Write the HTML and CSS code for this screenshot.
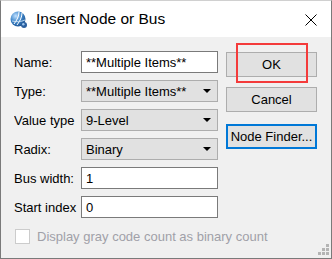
FILE: index.html
```html
<!DOCTYPE html>
<html lang="en">
<head>
    <meta charset="UTF-8">
    <title>Insert Node or Bus</title>
    <link rel="stylesheet" href="styles.css">
</head>
<body>
    <div class="window">
        <div class="titlebar">
            <svg class="app-icon" width="18" height="18" viewBox="0 0 18 18">
                <defs>
                    <radialGradient id="globe" cx="0.35" cy="0.3" r="0.8">
                        <stop offset="0" stop-color="#bfe0ff"/>
                        <stop offset="0.5" stop-color="#3d85c9"/>
                        <stop offset="1" stop-color="#1b4f8c"/>
                    </radialGradient>
                </defs>
                <circle cx="8" cy="8" r="7.5" fill="url(#globe)"/>
                <path d="M4 13 C7 9 9 5 9 1" stroke="#fff" stroke-width="1" fill="none"/>
                <path d="M7 14 C10 10 12 6 12 2" stroke="#fff" stroke-width="1" fill="none"/>
                <path d="M2 10 C6 11 11 11 15 9" stroke="#dbeaf7" stroke-width="0.8" fill="none"/>
                <circle cx="14" cy="14" r="3" fill="#2a5f9e"/>
                <circle cx="13.3" cy="13.3" r="1.2" fill="#9cc6ef"/>
            </svg>
            <span class="title">Insert Node or Bus</span>
            <svg class="close" width="12" height="12" viewBox="0 0 12 12">
                <path d="M0.5 0.5 L11.5 11.5 M11.5 0.5 L0.5 11.5" stroke="#000" stroke-width="1"/>
            </svg>
        </div>

        <div class="content">
            <div class="main">
                <div class="fields">
                    <label>Name:</label>
                    <div class="input">**Multiple Items**</div>

                    <label>Type:</label>
                    <div class="select">**Multiple Items**<span class="arrow"></span></div>

                    <label>Value type</label>
                    <div class="select">9-Level<span class="arrow"></span></div>

                    <label>Radix:</label>
                    <div class="select">Binary<span class="arrow"></span></div>

                    <label>Bus width:</label>
                    <div class="input">1</div>

                    <label>Start index</label>
                    <div class="input">0</div>
                </div>

                <div class="buttons">
                    <div class="button">OK</div>
                    <div class="button">Cancel</div>
                    <div class="button focused">Node Finder...</div>
                </div>
            </div>

            <div class="check-row">
                <span class="checkbox"></span>
                <span class="check-text">Display gray code count as binary count</span>
            </div>

            <svg class="grip" width="12" height="12" viewBox="0 0 12 12">
                <rect x="9" y="1" width="3" height="3" fill="#b4b4b4"/>
                <rect x="5" y="5" width="3" height="3" fill="#b4b4b4"/>
                <rect x="9" y="5" width="3" height="3" fill="#b4b4b4"/>
                <rect x="1" y="9" width="3" height="3" fill="#b4b4b4"/>
                <rect x="5" y="9" width="3" height="3" fill="#b4b4b4"/>
                <rect x="9" y="9" width="3" height="3" fill="#b4b4b4"/>
            </svg>
        </div>

        <div class="highlight"></div>
    </div>
</body>
</html>
```

FILE: styles.css
```css
/* Window */
body {
    margin: 0;
    font-family: "Liberation Sans", Arial, sans-serif;
    font-size: 13px;
    color: #000;
    background: #fff;
}

.window {
    position: relative;
    width: 332px;
    height: 259px;
    box-sizing: border-box;
    border: 1px solid #7a7a7a;
    border-top-color: #d0d0d0;
    display: flex;
    flex-direction: column;
    overflow: hidden;
}

.titlebar {
    height: 36px;
    background: #fff;
    display: flex;
    align-items: center;
    padding-left: 9px;
    padding-right: 14px;
}

.app-icon {
    margin-right: 8px;
    margin-top: 1px;
}

.title {
    font-size: 15.5px;
    flex: 1;
    padding-bottom: 1px;
}

.close {
    margin-top: 1px;
}

/* Body */
.content {
    position: relative;
    flex: 1;
    background: #f0f0f0;
    padding: 14px 13px 0 13px;
}

.main {
    display: flex;
}

.fields {
    display: grid;
    grid-template-columns: 67px 137px;
    grid-auto-rows: 22px;
    row-gap: 7px;
}

.fields label {
    display: flex;
    align-items: center;
    white-space: nowrap;
    overflow: hidden;
    padding-right: 2px;
}

.input,
.select {
    box-sizing: border-box;
    display: flex;
    align-items: center;
    padding-left: 4px;
    white-space: nowrap;
}

.input {
    background: #fff;
    border: 1px solid #7a7a7a;
}

.select {
    position: relative;
    background: #e1e1e1;
    border: 1px solid #adadad;
}

.arrow {
    position: absolute;
    right: 6px;
    top: 8px;
    border-left: 4px solid transparent;
    border-right: 4px solid transparent;
    border-top: 4px solid #000;
}

.buttons {
    margin-left: 8px;
    margin-top: 1px;
    display: flex;
    flex-direction: column;
    gap: 10px;
}

.button {
    box-sizing: border-box;
    width: 91px;
    height: 25px;
    background: #e1e1e1;
    border: 1px solid #adadad;
    display: flex;
    align-items: center;
    justify-content: center;
}

.button.focused {
    border: 2px solid #0078d7;
    margin-top: 2px;
}

.check-row {
    display: flex;
    align-items: center;
    margin-top: 11px;
}

.checkbox {
    box-sizing: border-box;
    width: 15px;
    height: 15px;
    background: #fff;
    border: 1px solid #cccccc;
    margin-left: 1px;
    margin-right: 7px;
}

.check-text {
    color: #a0a0a8;
}

.grip {
    position: absolute;
    right: 2px;
    bottom: 3px;
}

/* Annotation box over the OK button */
.highlight {
    position: absolute;
    left: 235px;
    top: 42px;
    width: 72px;
    height: 40px;
    box-sizing: border-box;
    border: 2px solid #f43b3b;
}
```
